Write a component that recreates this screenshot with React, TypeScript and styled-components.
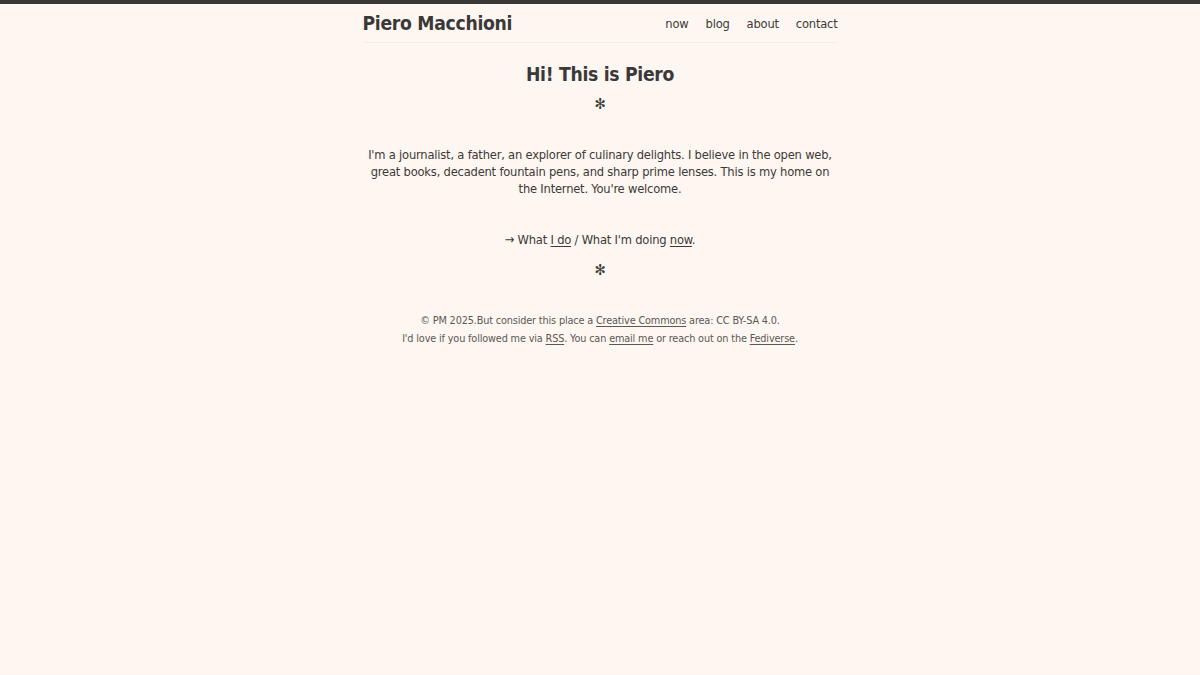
import React from "react";
import styled, { createGlobalStyle } from "styled-components";

const GlobalStyle = createGlobalStyle`
  html, body {
    margin: 0;
    padding: 0;
    background: #fef6f0;
  }
  body {
    border-top: 4px solid #3a3737;
    font-family: "DejaVu Sans Condensed", "DejaVu Sans", sans-serif;
    font-stretch: condensed;
    color: #3c3a39;
    font-size: 12.8px;
    letter-spacing: -0.2px;
    min-height: 671px;
  }
`;

const Page = styled.div`
  max-width: 475px;
  margin: 0 auto;
`;

const Header = styled.header`
  display: flex;
  align-items: center;
  justify-content: space-between;
  height: 38px;
  border-bottom: 1px solid #f7ece4;
`;

const SiteTitle = styled.a`
  font-size: 19.2px;
  letter-spacing: -0.3px;
  font-weight: bold;
  color: #3a3838;
  text-decoration: none;
`;

const Nav = styled.nav`
  display: flex;
  gap: 17px;
`;

const NavLink = styled.a`
  font-size: 12.8px;
  color: #3c3a39;
  text-decoration: none;
`;

const Main = styled.main`
  text-align: center;
  padding-top: 20px;
`;

const Title = styled.h1`
  font-size: 19.2px;
  letter-spacing: -0.3px;
  font-weight: bold;
  margin: 0;
  line-height: 24px;
  color: #3a3838;
`;

const Divider = styled.div<{ $top: number }>`
  font-size: 15px;
  line-height: 18px;
  margin-top: ${(p) => p.$top}px;
`;

const Intro = styled.p`
  margin: 33px 0 0;
  line-height: 17px;
  padding: 0 1px;
`;

const Pointers = styled.p`
  margin: 34px 0 0;
  line-height: 17px;
`;

const Underlined = styled.a`
  color: inherit;
  text-decoration: underline;
  text-underline-offset: 2px;
`;

const Footer = styled.footer`
  text-align: center;
  font-size: 10.8px;
  letter-spacing: -0.15px;
  color: #5b5856;
  line-height: 18px;
  margin-top: 33px;
`;

export default function App() {
  return (
    <>
      <GlobalStyle />
      <Page>
        <Header>
          <SiteTitle href="#">Piero Macchioni</SiteTitle>
          <Nav>
            <NavLink href="#">now</NavLink>
            <NavLink href="#">blog</NavLink>
            <NavLink href="#">about</NavLink>
            <NavLink href="#">contact</NavLink>
          </Nav>
        </Header>
        <Main>
          <Title>Hi! This is Piero</Title>
          <Divider $top={8}>✻</Divider>
          <Intro>
            I'm a journalist, a father, an explorer of culinary delights. I
            believe in the open web, great books, decadent fountain pens, and
            sharp prime lenses. This is my home on the Internet. You're
            welcome.
          </Intro>
          <Pointers>
            → What <Underlined href="#">I do</Underlined> / What I'm doing{" "}
            <Underlined href="#">now</Underlined>.
          </Pointers>
          <Divider $top={13}>✻</Divider>
        </Main>
        <Footer>
          <div>
            © PM 2025.But consider this place a{" "}
            <Underlined href="#">Creative Commons</Underlined> area: CC BY-SA
            4.0.
          </div>
          <div>
            I'd love if you followed me via <Underlined href="#">RSS</Underlined>
            . You can <Underlined href="#">email me</Underlined> or reach out on
            the <Underlined href="#">Fediverse</Underlined>.
          </div>
        </Footer>
      </Page>
    </>
  );
}
